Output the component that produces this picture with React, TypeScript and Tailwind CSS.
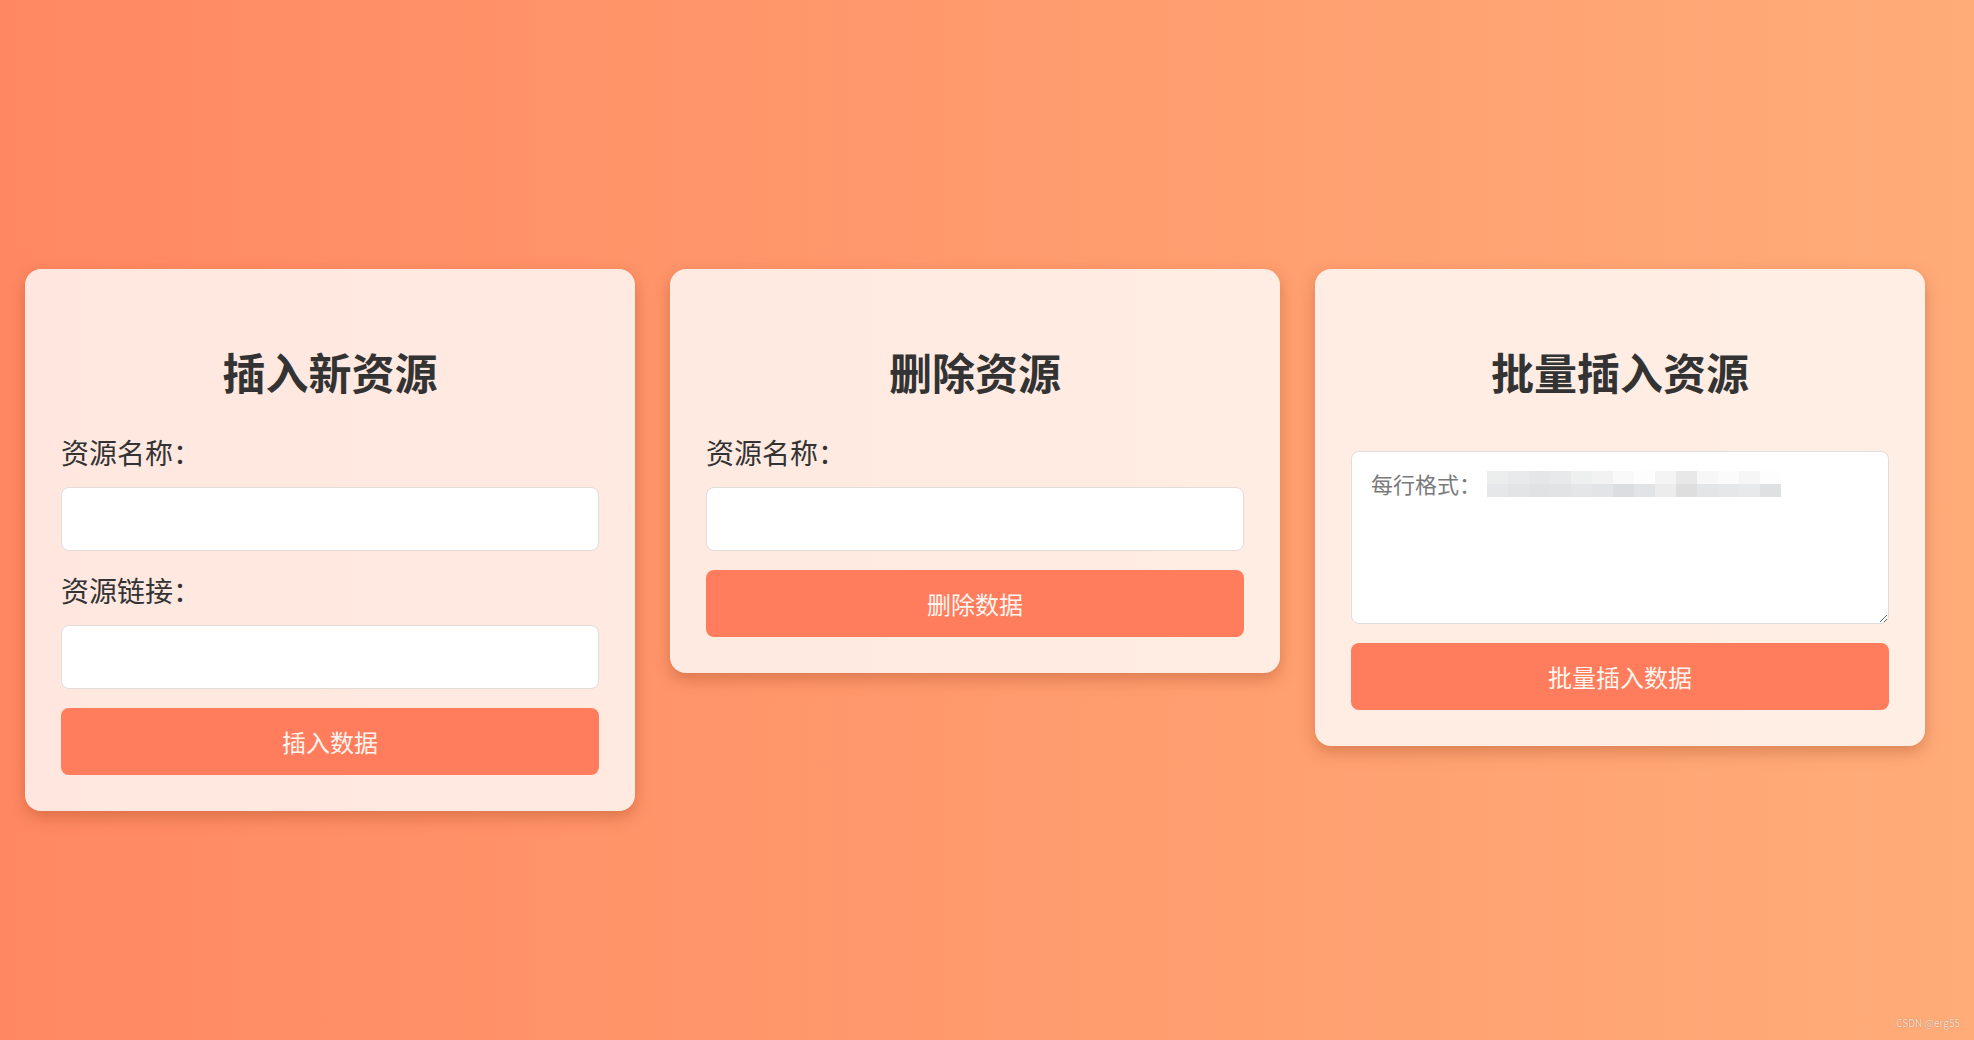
import React, { useState } from "react";

const font = { fontFamily: '"Noto Sans CJK SC", "Noto Sans", sans-serif' };

function Card({ title, children }: { title: string; children: React.ReactNode }) {
  return (
    <div className="w-[610px] shrink-0 rounded-[16px] bg-white/80 px-[36px] pt-[36px] pb-[36px] shadow-[0_6px_16px_rgba(150,60,20,0.35)]">
      <h2 className="mt-[41px] text-center text-[43px] leading-[50px] font-bold text-[#333]">{title}</h2>
      {children}
    </div>
  );
}

function Field({ label, first }: { label: string; first?: boolean }) {
  return (
    <div className={first ? "mt-[38px]" : "mt-[21px]"}>
      <label className="block text-[28px] leading-[36px] text-[#333]">{label}</label>
      <input className="mt-[17px] block h-[64px] w-full rounded-[8px] border border-[#e2dcda] bg-white px-4 text-[22px] outline-none" />
    </div>
  );
}

function Button({ text }: { text: string }) {
  return (
    <button className="mt-[19px] block h-[67px] w-full rounded-[8px] bg-[#ff7d5d] text-[24px] text-[#fff5f0]">
      {text}
    </button>
  );
}

export default function App() {
  const [bulk, setBulk] = useState("");
  // pixelated (blurred) part of the placeholder
  const mosaic = [
    ["#eceded", "#e9eaeb", "#e4e6e8", "#e8e9ea", "#eeefef", "#f2f2f2", "#f9f9f9", "#fdfdfd", "#f4f4f4", "#e8e8e8", "#f7f7f7", "#fbfbfb", "#f6f6f6", "#fdfdfd"],
    ["#e6e7e9", "#e3e4e6", "#e1e2e4", "#e2e3e5", "#e5e6e7", "#e3e4e6", "#dcdde0", "#e2e3e4", "#ececec", "#dededf", "#e4e5e6", "#e6e7e8", "#e8e9ea", "#dfe0e2"],
  ];

  return (
    <div style={font} className="relative flex h-[1040px] w-full items-start gap-[35px] overflow-hidden bg-linear-to-r from-[#ff8862] to-[#ffac79] pt-[269px] pl-[25px]">
      <Card title="插入新资源">
        <Field label="资源名称：" first />
        <Field label="资源链接：" />
        <Button text="插入数据" />
      </Card>

      <Card title="删除资源">
        <Field label="资源名称：" first />
        <Button text="删除数据" />
      </Card>

      <Card title="批量插入资源">
        <div className="relative mt-[55px]">
          <textarea
            value={bulk}
            onChange={(e) => setBulk(e.target.value)}
            placeholder="每行格式："
            className="block h-[173px] w-full rounded-[8px] border border-[#e2dcda] bg-white px-[19px] py-[15px] text-[22px] leading-[32px] text-[#333] outline-none placeholder:text-[#7a7a7a]"
            style={{ fontFamily: '"Noto Sans CJK SC", serif' }}
          />
          {bulk === "" && (
            <div className="pointer-events-none absolute top-[20px] left-[136px] flex flex-col">
              {mosaic.map((row, i) => (
                <div key={i} className="flex">
                  {row.map((c, j) => (
                    <div key={j} className="h-[13px] w-[21px]" style={{ background: c }} />
                  ))}
                </div>
              ))}
            </div>
          )}
        </div>
        <Button text="批量插入数据" />
      </Card>

      <div className="absolute right-[14px] bottom-[10px] text-[10px] text-[#fde5d6] [text-shadow:0_0_1px_#a06040]">CSDN @erg55</div>
    </div>
  );
}
